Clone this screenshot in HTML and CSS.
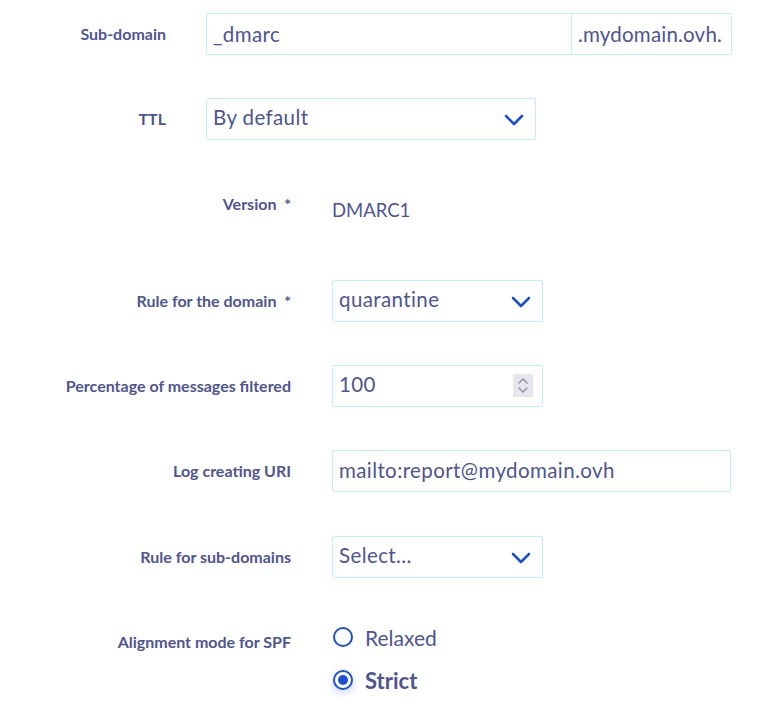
FILE: index.html
```html
<!DOCTYPE html>
<html lang="en">
<head>
<meta charset="utf-8">
<title>DMARC record</title>
<link rel="stylesheet" href="styles.css">
</head>
<body>
<form class="page">
  <div class="group group-a">
    <div class="row row-first">
      <label class="label" for="sub">Sub-domain</label>
      <div class="field field-sub">
        <input id="sub" class="input input-sub" type="text" value="_dmarc">
        <span class="suffix">.mydomain.ovh.</span>
      </div>
    </div>
    <div class="row">
      <label class="label" for="ttl">TTL</label>
      <div class="field field-ttl select-wrap">
        <div id="ttl" class="input select">By default</div>
        <svg class="chev" width="20" height="12" viewBox="0 0 20 12"><path d="M2 2l8 8 8-8" fill="none" stroke="#1c4fd6" stroke-width="2.6" stroke-linecap="round" stroke-linejoin="round"/></svg>
      </div>
    </div>
  </div>

  <div class="group group-b">
    <div class="row row-version">
      <span class="label label-top">Version&nbsp; *</span>
      <span class="value">DMARC1</span>
    </div>
    <div class="row row-rule">
      <label class="label">Rule for the domain&nbsp; *</label>
      <div class="field field-small select-wrap">
        <div class="input select">quarantine</div>
        <svg class="chev" width="20" height="12" viewBox="0 0 20 12"><path d="M2 2l8 8 8-8" fill="none" stroke="#1c4fd6" stroke-width="2.6" stroke-linecap="round" stroke-linejoin="round"/></svg>
      </div>
    </div>
    <div class="row">
      <label class="label">Percentage of messages filtered</label>
      <div class="field field-small select-wrap">
        <div class="input select">100</div>
        <span class="spinner">
          <svg width="20" height="23" viewBox="0 0 20 23"><path d="M6 9l4-4 4 4M6 14l4 4 4-4" fill="none" stroke="#8d8f9c" stroke-width="1.4" stroke-linecap="round" stroke-linejoin="round"/></svg>
        </span>
      </div>
    </div>
    <div class="row">
      <label class="label">Log creating URI</label>
      <div class="field field-uri">
        <div class="input">mailto:report@mydomain.ovh</div>
      </div>
    </div>
    <div class="row row-subrule">
      <label class="label">Rule for sub-domains</label>
      <div class="field field-small select-wrap">
        <div class="input select">Select...</div>
        <svg class="chev" width="20" height="12" viewBox="0 0 20 12"><path d="M2 2l8 8 8-8" fill="none" stroke="#1c4fd6" stroke-width="2.6" stroke-linecap="round" stroke-linejoin="round"/></svg>
      </div>
    </div>
    <div class="row row-spf">
      <span class="label label-spf">Alignment mode for SPF</span>
      <div class="radios">
        <label class="radio"><span class="dot"></span><span class="radio-text">Relaxed</span></label>
        <label class="radio radio-checked"><span class="dot"></span><span class="radio-text">Strict</span></label>
      </div>
    </div>
  </div>
</form>
</body>
</html>
```
FILE: styles.css
```css
* { box-sizing: border-box; }
html, body { margin: 0; padding: 0; background: #fff; }
body {
  font-family: "Lato", "Open Sans", sans-serif;
  color: #4d5592;
}
.page {
  padding-top: 13px;
  width: 762px;
}
.row {
  display: grid;
  align-items: center;
  margin-top: 43px;
}
.row-first { margin-top: 0; }
.group-a .row { grid-template-columns: 166px auto; column-gap: 40px; }
.group-b .row { grid-template-columns: 291px auto; column-gap: 41px; }
.group-b .row-version { margin-top: 55px; align-items: start; }
.group-b .row-rule { margin-top: 55px; }
.group-b .row-subrule { margin-top: 44px; }
.group-b .row-spf { margin-top: 42px; align-items: start; }
.label {
  text-align: right;
  font-weight: 700;
  font-size: 16px;
  line-height: 18px;
  color: #4d5592;
  white-space: nowrap;
}
.field {
  position: relative;
  display: flex;
  height: 42px;
  border: 1px solid #c3eefa;
  border-radius: 2px;
  background: #fff;
}
.field-sub { width: 526px; }
.field-ttl { width: 330px; }
.field-small { width: 211px; }
.field-uri { width: 399px; }
.input {
  flex: 1;
  min-width: 0;
  border: 0;
  outline: 0;
  padding: 0 6px;
  font-family: inherit;
  font-size: 20.5px;
  letter-spacing: 0.4px;
  color: #4d5592;
  background: transparent;
  line-height: 38px;
  height: 40px;
}
.select { line-height: 36px; }
.suffix {
  width: 160px;
  border-left: 1px solid #c3eefa;
  padding: 0 6px;
  font-size: 20.5px;
  letter-spacing: 0.2px;
  line-height: 40px;
  white-space: nowrap;
}
.chev {
  position: absolute;
  right: 11px;
  top: 15px;
}
.spinner {
  position: absolute;
  right: 9px;
  top: 8px;
  width: 20px;
  height: 23px;
  background: #e6e7ee;
  display: flex;
}
.value {
  font-size: 18.5px;
  line-height: 30px;
}
.label-spf { padding-top: 13px; }
.radios {
  display: flex;
  flex-direction: column;
  gap: 9px;
}
.radio {
  display: flex;
  align-items: center;
  height: 34px;
  gap: 12px;
  font-size: 21px;
}
.dot {
  width: 20px;
  height: 20px;
  margin-left: 1px;
  border: 2px solid #1c4fd6;
  border-radius: 50%;
  position: relative;
  background: #fff;
}
.radio-checked .dot {
  box-shadow: 0 3px 8px rgba(28, 79, 214, 0.25);
}
.radio-checked .dot::after {
  content: "";
  position: absolute;
  left: 3px;
  top: 3px;
  width: 10px;
  height: 10px;
  border-radius: 50%;
  background: #1c4fd6;
}
.radio-checked .radio-text { font-weight: 700; font-size: 22px; }
```
